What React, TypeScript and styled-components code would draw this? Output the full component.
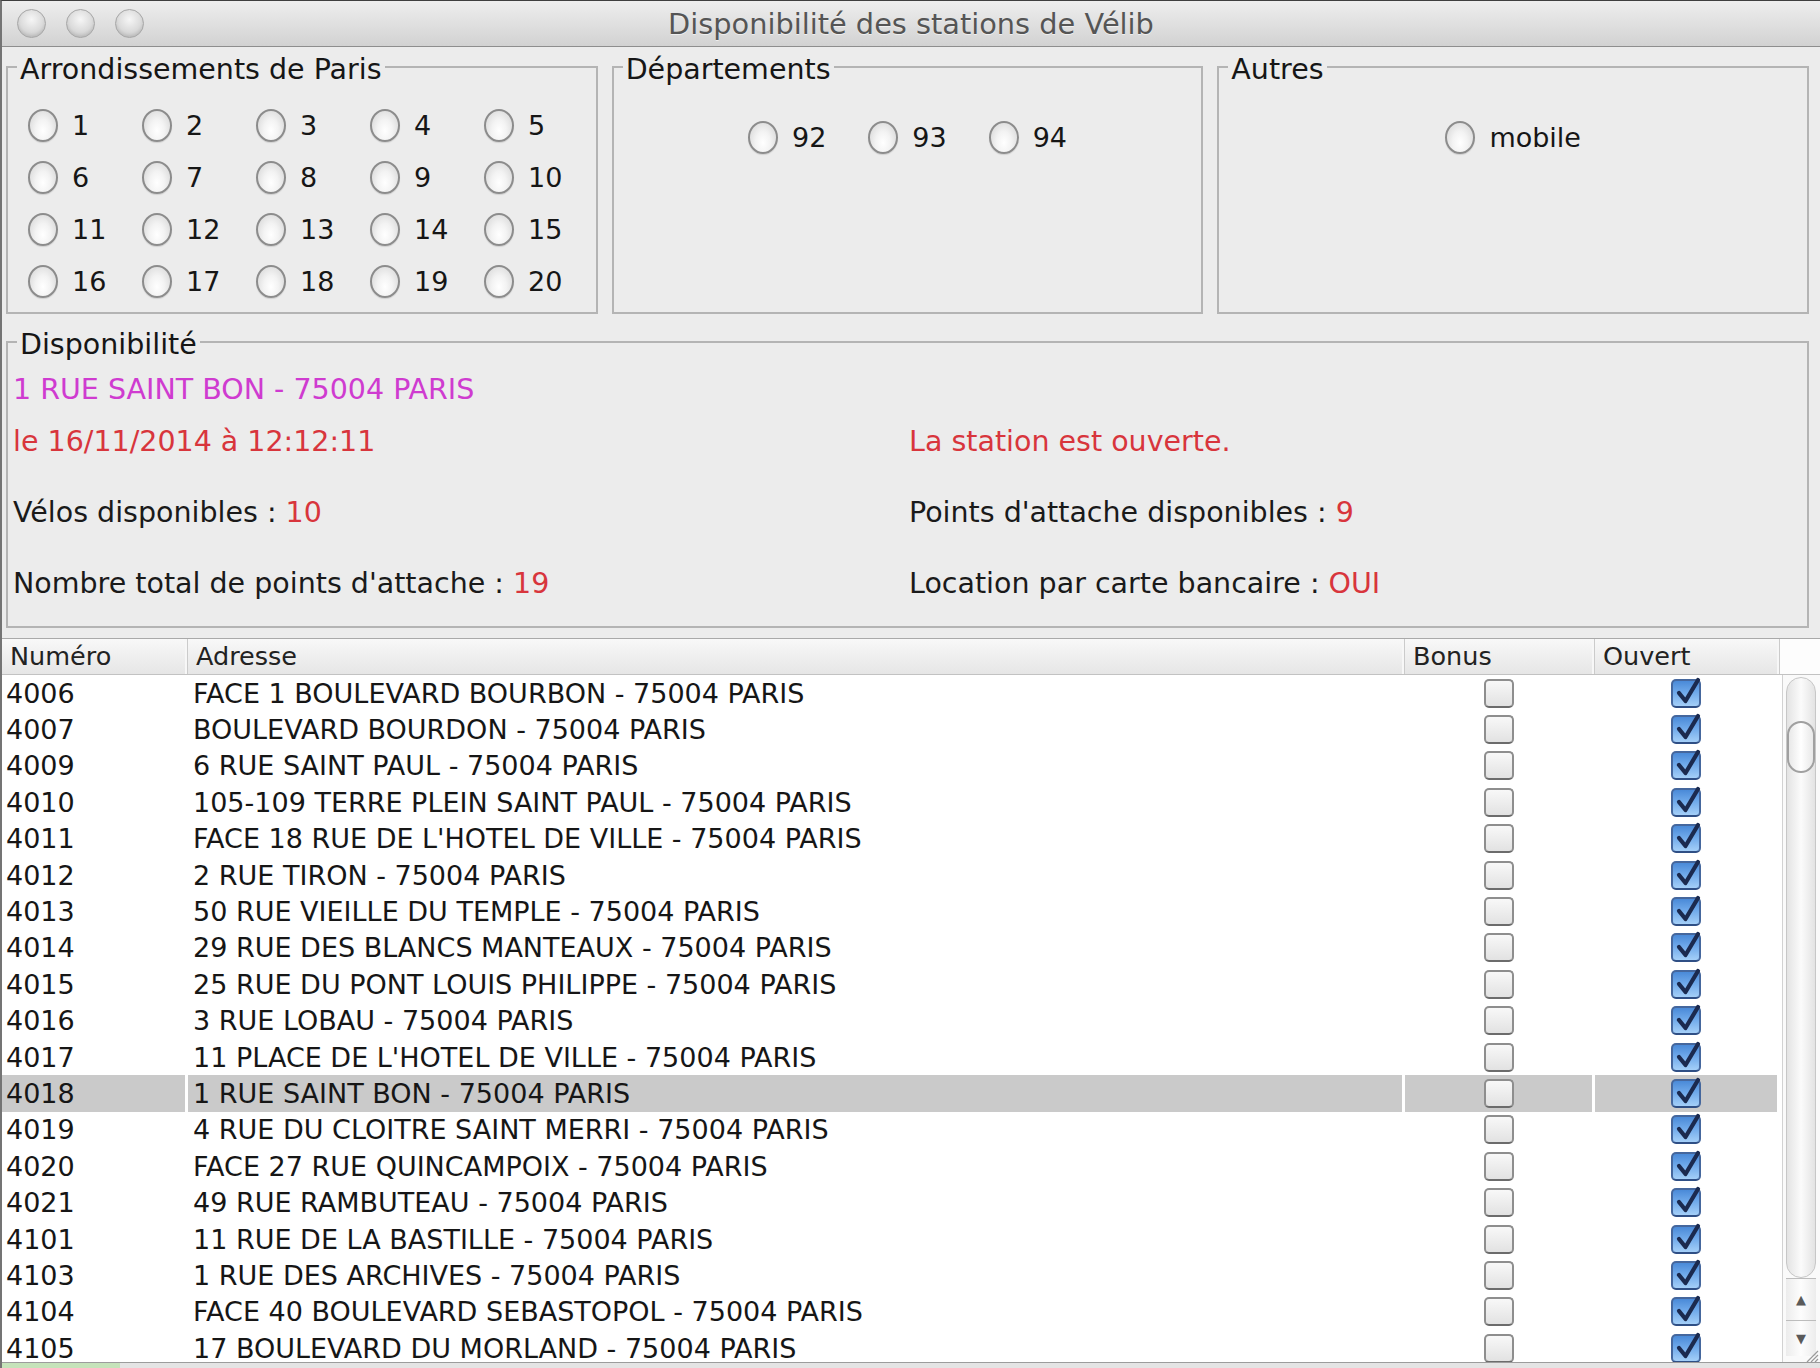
import styled, { createGlobalStyle } from "styled-components";

const FONT = `"DejaVu Sans", "Liberation Sans", Verdana, sans-serif`;
const COLS = "186px 1217px 190px 185px";

const GlobalStyle = createGlobalStyle`
  html, body {
    margin: 0;
    padding: 0;
    background: #ececec;
  }
  * {
    box-sizing: border-box;
  }
`;

const Window = styled.div`
  position: relative;
  width: 1820px;
  height: 1368px;
  display: flex;
  flex-direction: column;
  background: #ececec;
  border-top: 1px solid #3f3f3f;
  border-left: 2px solid #747474;
  font-family: ${FONT};
  color: #1c1c1c;
  overflow: hidden;
`;

const TitleBar = styled.div`
  flex: none;
  height: 46px;
  display: grid;
  grid-template-columns: 1fr auto 1fr;
  align-items: center;
  background: linear-gradient(#eeeeee, #d2d2d2);
  border-bottom: 1px solid #8e8e8e;
`;

const Lights = styled.div`
  display: flex;
  gap: 20px;
  padding-left: 15px;
`;

const Light = styled.span`
  width: 29px;
  height: 29px;
  border-radius: 50%;
  border: 1px solid #a6a6a6;
  background: radial-gradient(
    circle at 50% 35%,
    #f6f6f6 0%,
    #dadada 55%,
    #bcbcbc 100%
  );
  box-shadow: inset 0 -2px 3px rgba(0, 0, 0, 0.08);
`;

const Title = styled.div`
  font-size: 28.8px;
  color: #555;
  text-shadow: 0 1px 0 rgba(255, 255, 255, 0.6);
  white-space: nowrap;
`;

const Panels = styled.div`
  flex: none;
  padding: 4px 11px 0 4px;
  display: flex;
  flex-direction: column;
  gap: 12px;
`;

const TopRow = styled.div`
  height: 263px;
  display: grid;
  grid-template-columns: repeat(3, 1fr);
  gap: 14px;
`;

const Group = styled.fieldset`
  margin: 0;
  padding: 0;
  min-width: 0;
  border: 2px solid #b4b4b4;
`;

/* the title sits on the border line, a little below its middle */
const Legend = styled.legend`
  position: relative;
  top: 3px;
  margin-left: 9px;
  padding: 0 3px;
  font-size: 28.5px;
  line-height: 31px;
  color: #161616;
  white-space: nowrap;
`;

const RadioGrid = styled.div`
  display: grid;
  grid-template-columns: repeat(5, 114px);
  grid-auto-rows: 52px;
  align-items: center;
  padding: 17px 0 0 20px;
`;

const RadioFlow = styled.div`
  display: flex;
  justify-content: center;
  gap: 42px;
  padding-top: 37px;
`;

const RadioItem = styled.label`
  display: flex;
  align-items: center;
  gap: 14px;
  height: 36px;
  font-size: 27px;
  color: #161616;
  white-space: nowrap;
`;

const RadioDot = styled.span`
  flex: none;
  width: 30px;
  height: 33px;
  border-radius: 50%;
  border: 2px solid #8c8c8c;
  background: radial-gradient(
    ellipse at 50% 68%,
    #ffffff 0%,
    #f3f3f3 40%,
    #d2d2d2 100%
  );
  box-shadow: 0 1px 1px rgba(0, 0, 0, 0.12);
`;

const InfoGroup = styled(Group)`
  height: 302px;
`;

const InfoGrid = styled.div`
  display: grid;
  grid-template-columns: 896px 1fr;
  grid-template-rows: 52px 71px 71px 36px;
  padding: 15px 0 0 5px;
`;

const InfoText = styled.div<{ $tone?: "plain" | "red" | "magenta"; $wide?: boolean }>`
  grid-column: ${({ $wide }) => ($wide ? "1 / span 2" : "auto")};
  font-size: 28.5px;
  line-height: 36px;
  white-space: nowrap;
  color: ${({ $tone }) =>
    $tone === "red" ? "#d8353c" : $tone === "magenta" ? "#cf3bd0" : "#1a1a1a"};
`;

const Value = styled.span`
  color: #d8353c;
`;

const TableArea = styled.div`
  flex: 1;
  min-height: 0;
  margin-top: 10px;
  display: flex;
  flex-direction: column;
  background: #fff;
  border-top: 1px solid #a9a9a9;
`;

const HeaderRow = styled.div`
  flex: none;
  height: 36px;
  display: grid;
  grid-template-columns: ${COLS} 1fr;
  background: linear-gradient(#f8f8f8, #e6e6e6);
  border-bottom: 1px solid #c2c2c2;
`;

const HeadCell = styled.div`
  padding-left: 8px;
  font-size: 25.5px;
  line-height: 35px;
  color: #222;
  white-space: nowrap;
  border-right: 1px solid #cbcbcb;
  box-shadow: inset -2px 0 0 #f7f7f7;
`;

const Corner = styled.div`
  background: #fdfdfd;
`;

const Body = styled.div`
  flex: 1;
  min-height: 0;
  display: grid;
  grid-template-columns: 1fr 38px;
  overflow: hidden;
`;

const Rows = styled.div`
  overflow: hidden;
`;

const Row = styled.div<{ $selected: boolean }>`
  height: 36.4px;
  display: grid;
  grid-template-columns: ${COLS};
  background: #fff;
  & > div {
    background: ${({ $selected }) => ($selected ? "#cacaca" : "#fff")};
  }
`;

const Cell = styled.div<{ $pad?: number; $center?: boolean }>`
  display: flex;
  align-items: center;
  justify-content: ${({ $center }) => ($center ? "center" : "flex-start")};
  padding-left: ${({ $pad }) => $pad ?? 0}px;
  border-right: 3px solid #fff;
  font-size: 27px;
  color: #161616;
  white-space: nowrap;
  overflow: hidden;
`;

const Box = styled.span<{ $checked: boolean }>`
  position: relative;
  width: 30px;
  height: 29px;
  border-radius: 5px;
  border: 2px solid ${({ $checked }) => ($checked ? "#45679d" : "#8e8e8e")};
  border-bottom-color: ${({ $checked }) => ($checked ? "#2f4f85" : "#6c6c6c")};
  background: ${({ $checked }) =>
    $checked
      ? "linear-gradient(#4a8ad8, #6fa9ea 45%, #a4cff8)"
      : "linear-gradient(#f8f8f8, #e2e2e2)"};
  svg {
    position: absolute;
    left: 1px;
    top: -3px;
    overflow: visible;
  }
`;

const ScrollBar = styled.div`
  display: flex;
  flex-direction: column;
  padding: 2px 4px 6px 3px;
  border-left: 1px solid #d2d2d2;
  background: #fafafa;
`;

const Track = styled.div`
  flex: 1;
  padding-top: 43px;
  border: 1px solid #c7c7c7;
  border-radius: 15px;
  background: linear-gradient(90deg, #e3e3e3, #fbfbfb 50%, #e3e3e3);
`;

const Thumb = styled.div`
  height: 52px;
  border: 2px solid #a0a0a0;
  border-radius: 15px;
  background: linear-gradient(90deg, #e8e8e8, #ffffff 50%, #e8e8e8);
`;

const Arrow = styled.div<{ $h: number }>`
  flex: none;
  height: ${({ $h }) => $h}px;
  display: flex;
  align-items: center;
  justify-content: center;
  border-top: 1px solid #bdbdbd;
  font-size: 13px;
  color: #5a5a5a;
  background: linear-gradient(90deg, #ececec, #fdfdfd 50%, #ececec);
`;

const Grip = styled.svg`
  position: absolute;
  right: 1px;
  bottom: 5px;
`;

const Footer = styled.div`
  flex: none;
  height: 6px;
  background: #e4e4e4;
  border-top: 1px solid #9c9c9c;
`;

const GreenTab = styled.div`
  width: 118px;
  height: 100%;
  background: #c5e3ba;
`;

const ARRONDISSEMENTS = Array.from({ length: 20 }, (_, i) => String(i + 1));

const STATIONS: [string, string][] = [
  ["4006", "FACE 1 BOULEVARD BOURBON - 75004 PARIS"],
  ["4007", "BOULEVARD BOURDON - 75004 PARIS"],
  ["4009", "6 RUE SAINT PAUL - 75004 PARIS"],
  ["4010", "105-109 TERRE PLEIN SAINT PAUL - 75004 PARIS"],
  ["4011", "FACE 18 RUE DE L'HOTEL DE VILLE - 75004 PARIS"],
  ["4012", "2 RUE TIRON - 75004 PARIS"],
  ["4013", "50 RUE VIEILLE DU TEMPLE - 75004 PARIS"],
  ["4014", "29 RUE DES BLANCS MANTEAUX - 75004 PARIS"],
  ["4015", "25 RUE DU PONT LOUIS PHILIPPE - 75004 PARIS"],
  ["4016", "3 RUE LOBAU - 75004 PARIS"],
  ["4017", "11 PLACE DE L'HOTEL DE VILLE - 75004 PARIS"],
  ["4018", "1 RUE SAINT BON - 75004 PARIS"],
  ["4019", "4 RUE DU CLOITRE SAINT MERRI - 75004 PARIS"],
  ["4020", "FACE 27 RUE QUINCAMPOIX - 75004 PARIS"],
  ["4021", "49 RUE RAMBUTEAU - 75004 PARIS"],
  ["4101", "11 RUE DE LA BASTILLE - 75004 PARIS"],
  ["4103", "1 RUE DES ARCHIVES - 75004 PARIS"],
  ["4104", "FACE 40 BOULEVARD SEBASTOPOL - 75004 PARIS"],
  ["4105", "17 BOULEVARD DU MORLAND - 75004 PARIS"],
];

function Radio({ label }: { label: string }) {
  return (
    <RadioItem>
      <RadioDot />
      {label}
    </RadioItem>
  );
}

function Check({ checked }: { checked: boolean }) {
  return (
    <Box $checked={checked}>
      {checked && (
        <svg width="26" height="28" viewBox="0 0 26 28">
          <path
            d="M5 15 L11.5 23 L24 2"
            fill="none"
            stroke="#1b2a4f"
            strokeWidth="4.2"
            strokeLinecap="round"
            strokeLinejoin="round"
          />
        </svg>
      )}
    </Box>
  );
}

export default function App() {
  return (
    <>
      <GlobalStyle />
      <Window>
        <TitleBar>
          <Lights>
            <Light />
            <Light />
            <Light />
          </Lights>
          <Title>Disponibilité des stations de Vélib</Title>
          <div />
        </TitleBar>

        <Panels>
          <TopRow>
            <Group>
              <Legend>Arrondissements de Paris</Legend>
              <RadioGrid>
                {ARRONDISSEMENTS.map((n) => (
                  <Radio key={n} label={n} />
                ))}
              </RadioGrid>
            </Group>
            <Group>
              <Legend>Départements</Legend>
              <RadioFlow>
                <Radio label="92" />
                <Radio label="93" />
                <Radio label="94" />
              </RadioFlow>
            </Group>
            <Group>
              <Legend>Autres</Legend>
              <RadioFlow>
                <Radio label="mobile" />
              </RadioFlow>
            </Group>
          </TopRow>

          <InfoGroup>
            <Legend>Disponibilité</Legend>
            <InfoGrid>
              <InfoText $tone="magenta" $wide>
                1 RUE SAINT BON - 75004 PARIS
              </InfoText>
              <InfoText $tone="red">le 16/11/2014 à 12:12:11</InfoText>
              <InfoText $tone="red">La station est ouverte.</InfoText>
              <InfoText>
                Vélos disponibles : <Value>10</Value>
              </InfoText>
              <InfoText>
                Points d'attache disponibles : <Value>9</Value>
              </InfoText>
              <InfoText>
                Nombre total de points d'attache : <Value>19</Value>
              </InfoText>
              <InfoText>
                Location par carte bancaire : <Value>OUI</Value>
              </InfoText>
            </InfoGrid>
          </InfoGroup>
        </Panels>

        <TableArea>
          <HeaderRow>
            <HeadCell>Numéro</HeadCell>
            <HeadCell>Adresse</HeadCell>
            <HeadCell>Bonus</HeadCell>
            <HeadCell>Ouvert</HeadCell>
            <Corner />
          </HeaderRow>
          <Body>
            <Rows>
              {STATIONS.map(([num, addr]) => (
                <Row key={num} $selected={num === "4018"}>
                  <Cell $pad={4}>{num}</Cell>
                  <Cell $pad={5}>{addr}</Cell>
                  <Cell $center>
                    <Check checked={false} />
                  </Cell>
                  <Cell $center>
                    <Check checked />
                  </Cell>
                </Row>
              ))}
            </Rows>
            <ScrollBar>
              <Track>
                <Thumb />
              </Track>
              <Arrow $h={42}>▲</Arrow>
              <Arrow $h={36}>▼</Arrow>
            </ScrollBar>
          </Body>
        </TableArea>

        <Footer>
          <GreenTab />
        </Footer>

        <Grip width="16" height="16" viewBox="0 0 16 16">
          <path d="M15 4 L4 15 M15 8 L8 15 M15 12 L12 15" stroke="#9a9a9a" strokeWidth="1.2" />
        </Grip>
      </Window>
    </>
  );
}
